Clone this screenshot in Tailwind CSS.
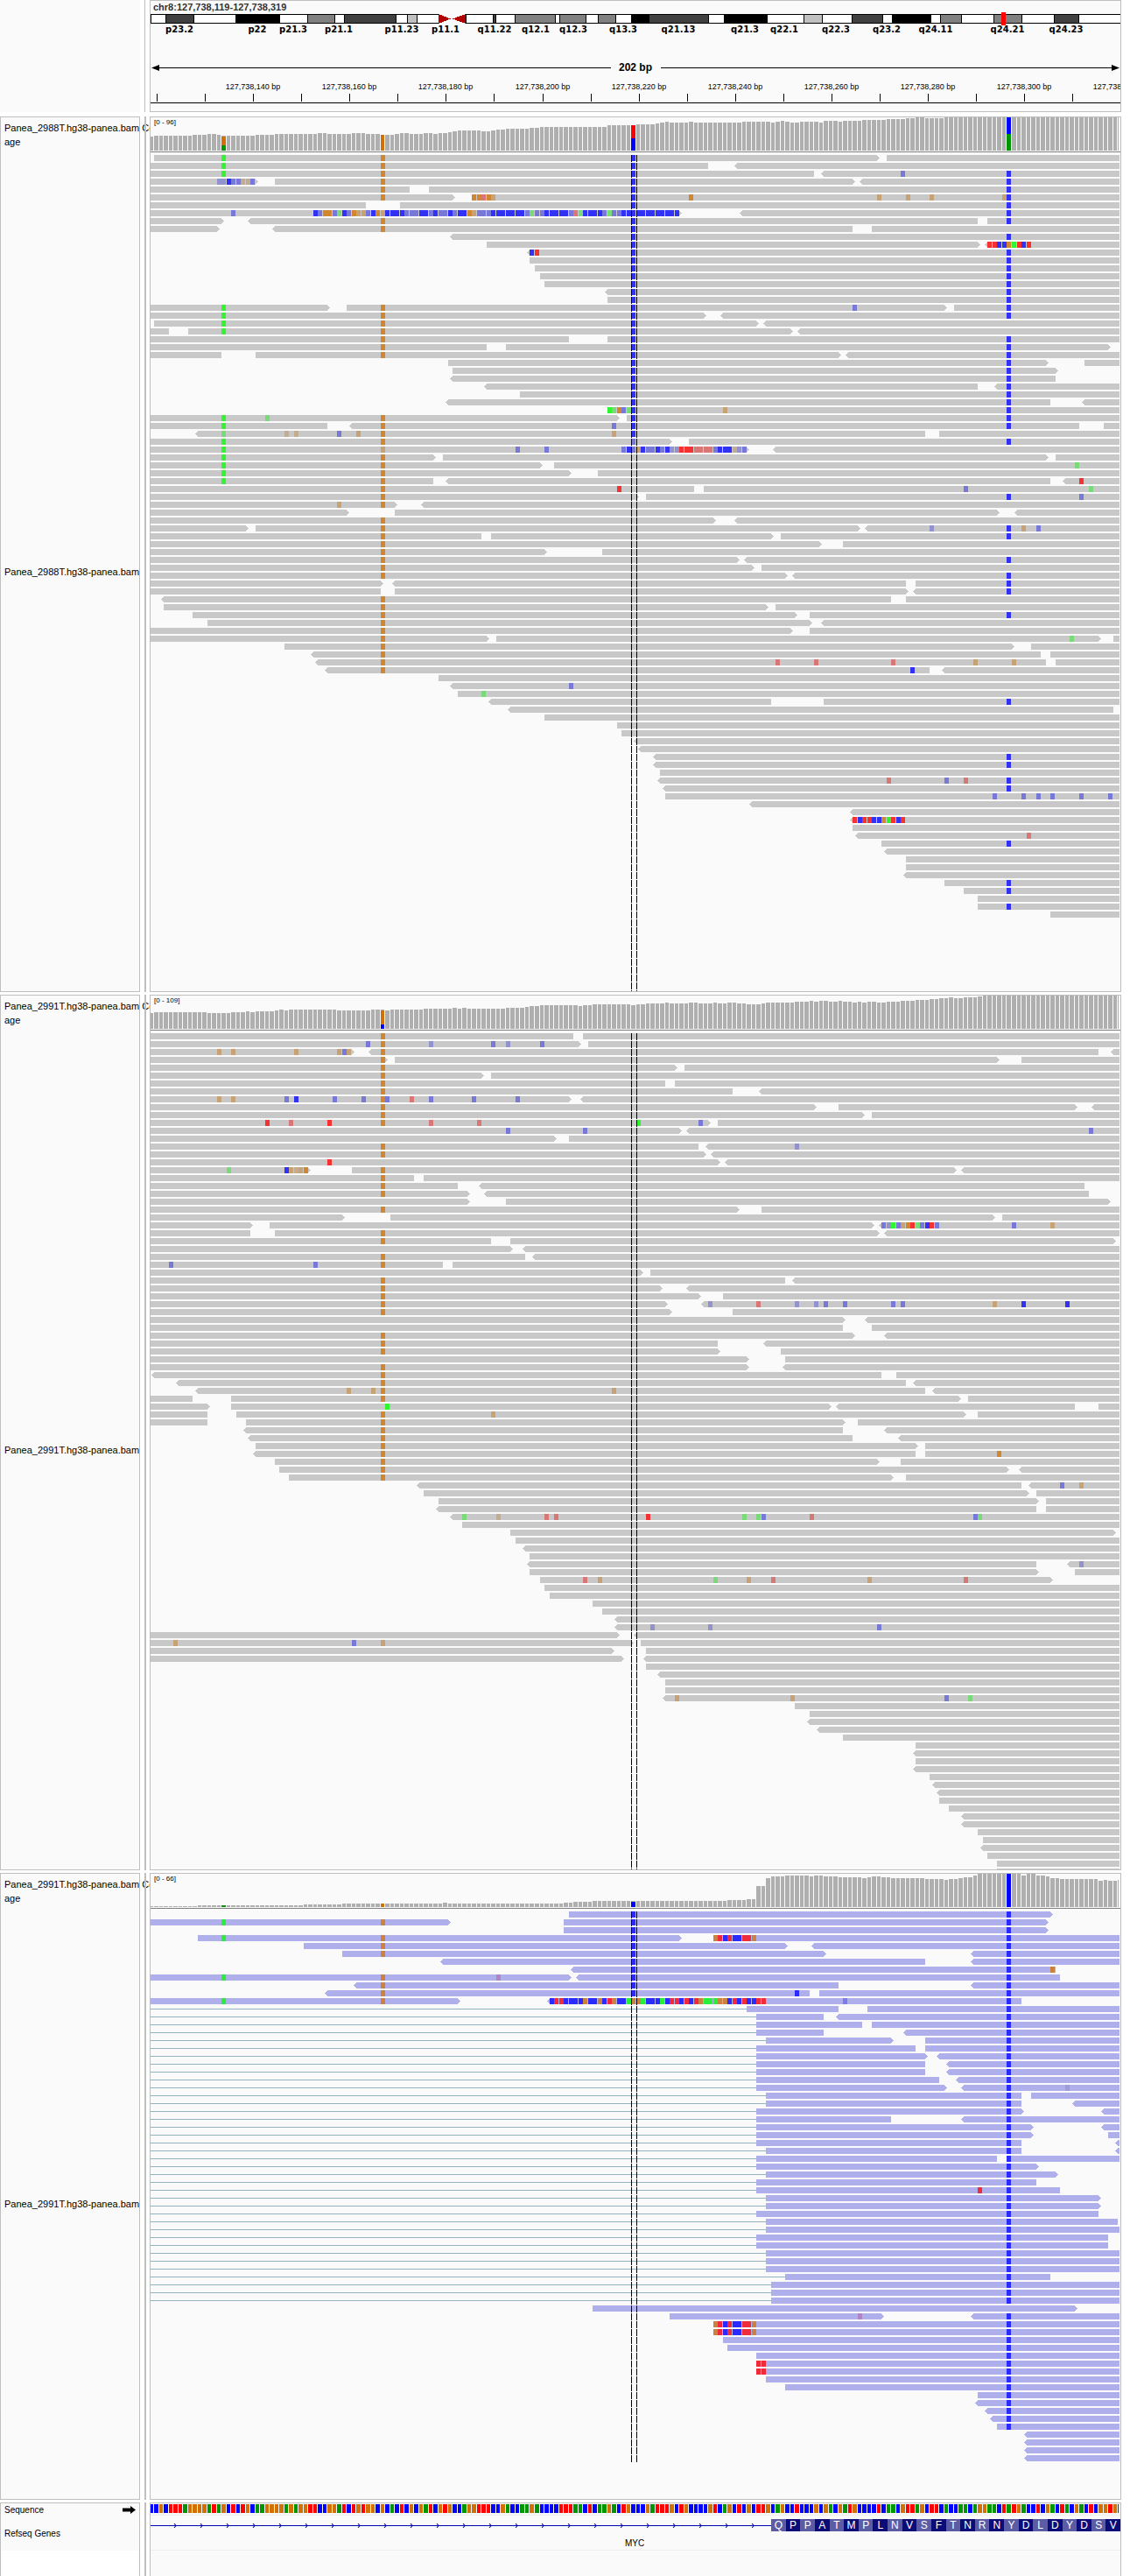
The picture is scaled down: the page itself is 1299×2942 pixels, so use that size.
<!DOCTYPE html>
<html lang="en">
<head>
<meta charset="utf-8">
<meta name="viewport" content="width=device-width, initial-scale=1">
<title>chr8:127,738,119-127,738,319</title>
<script src="https://cdn.jsdelivr.net/npm/@tailwindcss/browser@4"></script>
</head>
<body class="bg-white font-['Liberation_Sans',Arial,sans-serif] text-black">
<main class="flex min-h-screen flex-col gap-[3px] pr-[18px]">

  <!-- Ideogram and ruler -->
  <header class="mb-[2px] grid grid-cols-[160px_11px_minmax(0,1fr)]">
    <div class="bg-[#fafafa]"></div>
    <div class="flex pl-[5px]"><div class="w-px bg-[#bfbfbf]"></div></div>
    <div class="overflow-hidden border border-[#bfbfbf] bg-[#fafafa] pb-[9px]">
      <h1 class="h-[13px] pl-[3px] text-[11px] leading-[15px] font-bold whitespace-nowrap text-[#333]">chr8:127,738,119-127,738,319</h1>
      <svg id="ideogram" class="block h-[15px] w-full" viewBox="0 0 1108 15" preserveAspectRatio="none" shape-rendering="crispEdges"></svg>
      <div id="bands" class="relative h-[10px] font-['DejaVu_Sans',sans-serif] text-[10px] leading-[9px] font-bold"></div>
      <div class="mt-8 flex h-3 items-center">
        <div class="flex flex-1 items-center"><svg class="h-[7px] w-[10px]" viewBox="0 0 10 7"><path d="M1 3.5L10 0V7Z"/></svg><div class="h-px flex-1 bg-black"></div></div>
        <div class="w-[57px] text-center text-[12px] leading-3 font-bold">202 bp</div>
        <div class="flex flex-1 items-center"><div class="h-px flex-1 bg-black"></div><svg class="h-[7px] w-[10px]" viewBox="0 0 10 7"><path d="M9 3.5L0 0V7Z"/></svg></div>
      </div>
      <div id="ticklabels" class="relative mt-[11px] h-[10px] text-[9px] leading-[10px]"></div>
      <svg id="ticks" class="mt-[3px] block h-[11px] w-full" viewBox="0 0 1108 11" preserveAspectRatio="none" shape-rendering="crispEdges"></svg>
    </div>
  </header>

  <section class="grid grid-cols-[160px_11px_minmax(0,1fr)]">
    <div class="flex flex-col border border-[#bfbfbf] bg-[#fafafa] pl-1 text-[11px] leading-4 whitespace-nowrap">
      <div class="h-10 pt-1">Panea_2988T.hg38-panea.bam Cover<br>age</div>
      <div class="flex flex-1 items-center">Panea_2988T.hg38-panea.bam</div>
    </div>
    <div class="flex pl-[5px]"><div class="w-[2px] bg-[#bfbfbf]"></div></div>
    <div class="relative border border-[#bfbfbf] bg-[#fafafa]">
      <span class="absolute top-[2px] left-1 text-[8px] leading-[8px]">[0 - 96]</span>
      <svg id="cov1" class="block h-10 w-full" viewBox="0 0 1108 40" preserveAspectRatio="none" shape-rendering="crispEdges"></svg>
      <svg id="aln1" class="block h-[958px] w-full" viewBox="0 0 1108 958" preserveAspectRatio="none" shape-rendering="crispEdges"></svg>
    </div>
  </section>

  <section class="grid grid-cols-[160px_11px_minmax(0,1fr)]">
    <div class="flex flex-col border border-[#bfbfbf] bg-[#fafafa] pl-1 text-[11px] leading-4 whitespace-nowrap">
      <div class="h-10 pt-1">Panea_2991T.hg38-panea.bam Cover<br>age</div>
      <div class="flex flex-1 items-center">Panea_2991T.hg38-panea.bam</div>
    </div>
    <div class="flex pl-[5px]"><div class="w-[2px] bg-[#bfbfbf]"></div></div>
    <div class="relative border border-[#bfbfbf] bg-[#fafafa]">
      <span class="absolute top-[2px] left-1 text-[8px] leading-[8px]">[0 - 109]</span>
      <svg id="cov2" class="block h-10 w-full" viewBox="0 0 1108 40" preserveAspectRatio="none" shape-rendering="crispEdges"></svg>
      <svg id="aln2" class="block h-[958px] w-full" viewBox="0 0 1108 958" preserveAspectRatio="none" shape-rendering="crispEdges"></svg>
    </div>
  </section>

  <section class="grid grid-cols-[160px_11px_minmax(0,1fr)]">
    <div class="flex flex-col border border-[#bfbfbf] bg-[#fafafa] pl-1 text-[11px] leading-4 whitespace-nowrap">
      <div class="h-10 pt-1">Panea_2991T.hg38-panea.bam Cover<br>age</div>
      <div class="flex flex-1 items-center">Panea_2991T.hg38-panea.bam</div>
    </div>
    <div class="flex pl-[5px]"><div class="w-[2px] bg-[#bfbfbf]"></div></div>
    <div class="relative border border-[#bfbfbf] bg-[#fafafa]">
      <span class="absolute top-[2px] left-1 text-[8px] leading-[8px]">[0 - 66]</span>
      <svg id="cov3" class="block h-10 w-full" viewBox="0 0 1108 40" preserveAspectRatio="none" shape-rendering="crispEdges"></svg>
      <svg id="aln3" class="block h-[674px] w-full" viewBox="0 0 1108 674" preserveAspectRatio="none" shape-rendering="crispEdges"></svg>
    </div>
  </section>

  <!-- Reference sequence and genes -->
  <section class="grid flex-1 grid-cols-[160px_11px_minmax(0,1fr)]">
    <div class="border border-b-0 border-[#bfbfbf] bg-white text-[10px]">
      <div class="h-[54px] bg-[#fafafa] pl-1">
        <div class="flex h-[15px] items-center justify-between pr-1 leading-[15px]">Sequence
          <svg class="h-[9px] w-[15px]" viewBox="0 0 15 9"><path d="M0 2.5H9V0L15 4.5L9 9V6.5H0Z"/></svg>
        </div>
        <div class="mt-3 leading-[15px]">Refseq Genes</div>
      </div>
    </div>
    <div class="flex pl-[5px]"><div class="w-[2px] bg-[#bfbfbf]"></div></div>
    <div class="border border-b-0 border-[#bfbfbf] bg-[#fafafa]">
      <svg id="seq" class="block h-[14px] w-full border-b border-[#eee] pt-px" viewBox="0 0 1108 12" preserveAspectRatio="none" shape-rendering="crispEdges"></svg>
      <div class="h-10 border-b border-[#eee] pt-1">
        <div class="flex h-[14px] items-center">
          <svg id="intron" class="block h-[5px] w-[64%]" viewBox="0 0 709 5" preserveAspectRatio="none"></svg>
          <div id="exon" class="flex flex-1 text-center text-[12px] leading-[14px] text-white"></div>
        </div>
        <div class="mt-2 pr-[2px] text-center text-[10px] leading-3">MYC</div>
      </div>
    </div>
  </section>
</main>

<script>
// Pixel position of base k (0 = chr8:127,738,119) on a 1108 unit wide panel.
const X = k => Math.max(0, Math.min(1107, Math.round(k * 5.505 - 1.4)));
const $ = id => document.getElementById(id);
const rect = (x, y, w, h, f) => `<rect x="${x}" y="${y}" width="${w}" height="${h}" fill="${f}"/>`;

// ---- header ----
const D = '#404040', M = '#808080', L = '#c0c0c0', K = '#000';
const bandData = [[17,49,D],[97,147,K],[179,210,M],[221,280,D],[293,304,L],[391,394,D],[416,462,M],[467,497,M],[511,531,M],[549,569,K],[569,637,D],[655,704,K],[746,767,L],[801,836,D],[847,891,K],[902,926,M],[963,995,M],[1032,1060,D]];
$('ideogram').innerHTML = rect(0,2,1108,11,'#000') + rect(1,3,1107,9,'#fff')
  + bandData.map(([a,b,f]) => rect(a,2,b-a+1,11,'#000') + rect(a+1,3,b-a-1,9,f)).join('')
  + rect(329,2,31,11,'#fafafa')
  + '<path d="M329 2L343 7.5L329 13ZM360 2L345 7.5L360 13Z" fill="#b20000"/>' + rect(360,2,1,11,'#000')
  + rect(972,0,5,15,'#f00');
$('bands').innerHTML = [[33,'p23.2'],[122,'p22'],[163,'p21.3'],[215,'p21.1'],[287,'p11.23'],[337,'p11.1'],[393,'q11.22'],[440,'q12.1'],[483,'q12.3'],[540,'q13.3'],[603,'q21.13'],[679,'q21.3'],[724,'q22.1'],[783,'q22.3'],[841,'q23.2'],[897,'q24.11'],[979,'q24.21'],[1046,'q24.23']]
  .map(([x,t]) => `<span class="absolute -translate-x-1/2" style="left:${x/11.08}%">${t}</span>`).join('');
let ticks = rect(0,10,1108,1,'#000'), labels = '';
for (let p = 120; p <= 320; p += 10) {
  const x = X(p - 119) + 3;
  if (p < 320) ticks += rect(x,0,1,9,'#000');
  if (p > 120 && p % 20 === 0) labels += `<span class="absolute -translate-x-1/2 whitespace-nowrap" style="left:${x/11.08}%">127,738,${p} bp</span>`;
}
$('ticks').innerHTML = ticks;
$('ticklabels').innerHTML = labels;

// ---- coverage: "first-base:height" runs, plus allele stacks ----
const ref = {A:'#009600', C:'#0000ff', G:'#d17105', T:'#ff0000'};
function coverage(id, runs, alleles) {
  const r = runs.split(' ').map(s => s.split(':').map(Number));
  let out = rect(0,39,1108,1,'#808080');
  r.forEach(([k0,h], i) => {
    const k1 = i + 1 < r.length ? r[i+1][0] : 202;
    for (let k = k0; k < k1; k++) out += rect(X(k), 38-h, Math.max(1, X(k+1)-X(k)-1), h, '#afafaf');
  });
  for (const [k, stack] of alleles) {
    let y = 38;
    for (const [b,h] of stack) { y -= h; out += rect(X(k), y, X(k+1)-X(k)-1, h, ref[b]); }
  }
  $(id).innerHTML = out;
}
coverage('cov1', '0:16 1:17 9:18 12:19 14:18 15:17 22:18 26:19 35:20 37:19 42:20 45:19 48:18 51:19 52:20 54:19 57:20 59:19 60:20 62:21 63:22 64:23 69:22 71:23 72:24 74:25 79:26 81:27 95:29 101:30 105:31 106:32 107:33 108:32 112:33 113:32 123:33 129:32 130:33 131:34 132:33 133:32 135:33 139:32 140:34 143:33 144:34 148:35 153:36 157:37 159:38 161:37 165:38',
  [[15,[['A',6],['G',10]]],[48,[['G',18]]],[100,[['C',14],['T',15]]],[178,[['A',19],['C',19]]]]);
coverage('cov2', '0:18 1:19 12:18 17:19 20:20 21:19 22:20 26:21 27:22 28:21 29:22 39:21 46:22 49:21 50:22 57:23 63:24 64:23 65:24 66:23 74:24 78:25 79:26 81:27 89:26 90:27 92:28 100:27 101:28 103:29 107:30 108:29 112:30 114:29 117:30 118:29 120:30 122:29 124:28 127:29 128:30 134:31 137:32 138:31 139:32 141:31 143:32 144:31 146:30 147:31 148:30 149:31 151:30 153:31 156:32 159:33 162:34 164:35 166:36 167:35 169:36 172:37 173:38',
  [[48,[['C',5],['G',16]]]]);
coverage('cov3', '0:1 10:2 32:3 40:4 61:5 62:4 86:5 88:6 92:7 120:8 124:9 126:24 128:33 129:35 132:36 137:35 138:36 140:35 143:34 148:33 149:34 150:35 152:34 154:33 161:32 165:31 166:32 168:33 169:34 171:36 172:38 181:36 182:38 184:36 186:35 187:33 189:32 197:30 198:31 199:30 201:31',
  [[15,[['A',2]]],[48,[['G',4]]],[100,[['C',6]]],[178,[['C',38]]]]);

// ---- alignments ----
// One line per row. "a-b" is a read over bases a..b, "<" / ">" mark its pointed end;
// "CTg40" is a run of mismatches from base 40 (lower case = low base quality).
const grey = {read:'#c8c8c8', A:'#32f532', C:'#3232f5', G:'#d18632', T:'#f53232', a:'#78da78', c:'#7878d8', g:'#c7a275', t:'#d97777', d:'#9292cc', h:'#c4ac92'};
const lilac = {read:'#afafec', A:'#2bee3a', C:'#2b2bff', G:'#c98240', T:'#f02b3a', c:'#7b7bec', p:'#af85c4', q:'#a39bd6'};
function alignments(id, text, pal, dashEnd, splice) {
  let out = '', reads = '', marks = '';
  text.trim().split('\n').forEach((line, i) => {
    const y = 3 + i * 9;
    if (splice && i >= splice[0] && i <= splice[1]) out += rect(0, y+3, X(parseInt(line)), 1, '#93b3c3');
    for (const t of line.trim().split(' ')) {
      let m = t.match(/^(<?)(\d+)-(\d*)(>?)$/);
      if (m) {
        const a = X(+m[2]), b = m[3] ? X(+m[3]) : 1107;
        reads += `M${a} ${y}H${b}${m[4] ? `l3 3.5l-3 3.5` : 'v7'}H${a}${m[1] ? `l-3 -3.5Z` : 'Z'}`;
      } else if ((m = t.match(/^([A-Za-z]+)(\d+)$/))) {
        [...m[1]].forEach((c, j) => { marks += rect(X(+m[2]+j), y, 5, 7, pal[c]); });
      }
    }
  });
  const dash = x => `<path d="M${x} 3V${dashEnd}" stroke="#000" stroke-dasharray="8 1"/>`;
  $(id).innerHTML = out + `<path d="${reads}" fill="${pal.read}"/>` + marks + dash(549.5) + dash(555.5);
}

alignments('aln1', `
1-151> 153- A15 G48 C100
0-116 <122- A15 G48 C100
0-138 <140- A15 G48 C100 c156 C178
0-22> 26-146> <148- ddCcchhc14 G48 C100 C178
0-54 58- G48 C100 C178
0-63> 67- G48 GGtGg67 C100 G112 g151 g157 g162 g177 C178
0-45 52- C100 C178
0-110> <123- c17 CcGGcaCcGggcCGgCCCCcccCCcCccCcCCGgcccCCCCCCCcaccCCCCCctaCCCCcaccCCCCCCCCCCCC34 C178
0-15> <21-172 174- G48 C100 C178
0-14> <26-146 150- G48 C100
<63- C100 C178
70-172> <174- C100 TTCCGATCT174
<79- CT79 C100 C178
79- C100 C178
80- C100 C178
81- C100 C178
82- C100 C178
<95- C100 C178
95- C100 C178
0-37> 41-165> 167- A15 G48 C100 c146 C178
0-115> <119- A15 G48 C100 C178
1-126> <128- A15 G48 C100
0-4 8-133> <135- A15 G48 C100
0-87 95- G48 C100 C178
0-70 74-199> G48 C100 C178
0-15 22-143> <145- G48 C100 C178
62-186> 194- C100 C178
63-188> C100 C178
<63-188 C100 C178
<70-172 <176- C100 C178
77- C100 C178
<62-187 <194- C100 C178
95- AaGcaC95 g119 C178
0-97> 99- A15 a24 G48 C100 C178
0-37 <42-193 198- A15 G48 c96 C100 C178
<10-161 164- a15 h28 h30 c39 g43 G48 g96 C100
0-108> 112- A15 G48 c100 C178
0-124> <130- A15 g48 c76 c82 cCcgCccCcCddTTTttttcCCChdc98
0-59> 61-186> 188- A15 G48
0-81> 84- A15 G48 a192
0-87> 93- A15 G48
0-59 <62-187 <190- A15 G48 T193
0-113 115- G48 T97 c169 a195
0-101> 103- G48 C178 c193
0-51> <57- g39 G48
0-41> 51-176> <180-
0-117> <122- G48
0-20> 22-147> <149- G48 d162 C178 g181 c184
0-69 71-129> 131- G48 C178
0-139> 144- G48
0-82> 94- G48
0-122> <124- G48 C178
0-125> 127- G48
0-132> <134- G48 C178
0-48> <51-157 159- C178
0-48 51-157> <159- C178
<3-154 157- G48
3-128> 130- G48
9-134> 137- G48 C178
12-137> <140- G48
0-133> 137- G48
0-70> 72-197> 200- G48 a191
28-179> 183- G48
<34-185 187- G48
<35-186 188- G48 t130 t138 t154 g171 g179
<37-162 <165- G48 C158
60-
<63- c87
64- a69
<71-129 140- C178
<75-200
82-
97-
98-
<101-
<102-
<105- C178
<105- C178
106-
<106- t153 c165 t169 C178
<107- C178
107- c175 c181 c184 c187 c193 c199
<125-
<146-
<146- TCTTCCGATCT146
146-
<147- t182
152- C178
<153-
157-
157-
<157-
165- C178
169- C178
172-
172- C178
187-
`, grey, 958);

alignments('aln2', `
0-88 90- G48
0-89> 91- c45 G48 d58 c71 d74 c81
0-42> <46-197 <200- g14 g17 g30 gcg39 G48
0-49> 51-176> 181- G48
0-109> 111- G48
0-69> 71- G48
0-107 109- G48
0-121 <127- G48
0-87> <90- g14 g17 c28 C30 c38 c44 Gc48 t54 c58 c67 c76
0-138> 143-192> <196- G48
0-148> 150- G48
0-116> 118- T24 t29 T37 G48 t58 t68 A101 c114
0-110> <112- c74 c90 c195
0-84> 87-
0-114 <116- G48 d134
0-115> <117- G48
0-118> <120- T37
0-33> 42-167> <169- a16 CghgG28 G48
0-55 57- G48
0-64 <69-194 G48
0-66> <70-195 G48
0-66> 74-199>
0-122> 127- G48
0-40> 50-175> 177-
0-21> 25-150> <152- cdAcgGTacCTc152 c179 g187
0-21 26-151> <153- G48
0-71 75-200> G48
0-75> <78-
0-78 <80- G48
0-61 63- c4 c34 G48
0-102> 104-
0-132 <134- G48
0-106> <112- G48
0-114> 119- G48
0-107> <115- G48 d116 t126 d134 d138 c140 c144 c154 c156 g175 C181 C190
0-108> 121- G48
0-144> <149-
0-144 150-
0-146> <153- G48
0-118 <128- G48
0-118> 131- G48
0-124> 132-
0-124> <132- G48
<1-152 155- G48
<6-157 <159- G48
<10-161 <163- g41 g46 G48 g96
0-9 17-168> 170- G48
0-12> 17-141> <143-192 197- A49
0-12 18-169> 172- G48 g71
0-12 20-144> 147- G48
<20-144 <153- G48
<21-146 <156- G48
22-159> 161- G48
<22-159 161- G48 G176
26-151> 156- G48
27-178> <181- G48
29-154> 157- G48
<56-181 <183- c189 g193
57-182> 184-
60-184> 186-
<60-184 186-
<63- a65 h72 t82 t84 T103 a123 a126 c127 t137 c171 a172
65-
75-200>
76-
<78-
79-
<79-184 <191- d193
79-184> 192-
81-187> t90 g93 a117 g124 t129 g149 t169
82-
83-
92-
94-
<97-
<97- d104 d116 c151
0-97> <101-
0-100> 102- g5 c42 g48
0-96> 103-
0-98> <103-
103-
<106-
107-
107-
<107- g109 g133 c165 a170
134-
137-
<137-
<139-
144-
159-
<159-
159-
<159-
162-
<163-
<164-
164-
166-
<169-
<169-
172-
173-
<173-
174-
176-
176-
`, grey, 958);

alignments('aln3', `
87-187> C100 C178
0-62> 86-186> A15 G48 C100 C178
86-186> C100 C178
10-110> 117- A15 G48 C100 GTCTCCTTG117 C178
32-132> <138- G48 C100 C178
40-140> <171- G48 C100 C178
<61-161 <171- C100 C178
<88-188 C100 C178 G187
0-87> <89-189 A15 G48 p72 C100 C178
<43-143 <171- G48 C100 C178
<37-137 139- G48 C100 C134 C178
0-64> <83-181 A15 G48 CTTCCCCGCCGCTGCCAGGACCCACTTCTCTGAAAGGCTCTCCTT83 c144 C178
124-143 149- C178
126-140 <143- C178
126-148 150- C178
126-140 <157- C178
128-154> 161- C178
126-159 161- C178
126-161> <164- C178
126-161 <166- C178
126-161 <166- C178
126-164 <168- C178
126-165> <169- C178 q190
128-181 183- C178
128-181 <192- C178
126-181> <198- C178
126-154 <169- C178
126-183> <198- C178
126-183> 199- C178
126-181 <201- C178
128-181 <201- C178
126-176 178- C178
126-184> C178
128-188> C178
126-184 C178
126-189 T172 C178
128-197> C178
128-197> C178
126-197 C178
128-201 C178
128- C178
126-199 C178
126-199 C178
128- C178
128- C178
128- C178
132-187 C178
129- C178
129- C178
129- C178
92-192>
108-152> <171- p147 C178
117- GTCTCCTTG117 C178
117- GTCTCCTTG117 C178
119- C178
120- C178
126- C178
126- TT126 C178
126- TT126 C178
128- C178
132- C178
172- C178
<172- C178
<174- C178
<175- C178
176- C178
<182-
<182-
<182-
<182-
`, lilac, 632, [12, 49]);

// ---- sequence and gene ----
const bases = ('CCGCTTTAGGGGATAGCTCTGCAAGGGGAGAGGTTCCGGATCTGTGGCGCACTCGCGATCGTGCCAGGTTTCCGACCAAGACCCCTTTAACTCAAGACTGCCCGATTTGCTGCCCCGTCAGCTCGCTTG').slice(0,129)
  + 'CAGCCTCCCGCGACGATGCCCCTCAACGTTAGCTTCACCAACAGGAACTATGACCTCGACTACGACTCGGTG';
$('seq').innerHTML = [...bases].map((b,k) => rect(X(k), 0, X(k+1)-X(k)-1, 10, ref[b])).join('') + rect(1105,0,1,10,'#333');
let arrows = '<path d="M0 2.5H709" stroke="#0000b2" fill="none"/>';
for (let x = 28; x < 705; x += 30) arrows += `<path d="M${x-1} 0l2 2.5l-2 2.5" stroke="#0000b2" fill="none"/>`;
$('intron').innerHTML = arrows;
$('exon').innerHTML = [...'QPPATMPLNVSFTNRNYDLDYDSV'].map((a,i) =>
  `<span class="flex-1 ${i % 2 ? 'bg-[#0c0c78]' : 'bg-[#5c5ca5]'}">${a}</span>`).join('');
</script>
</body>
</html>
